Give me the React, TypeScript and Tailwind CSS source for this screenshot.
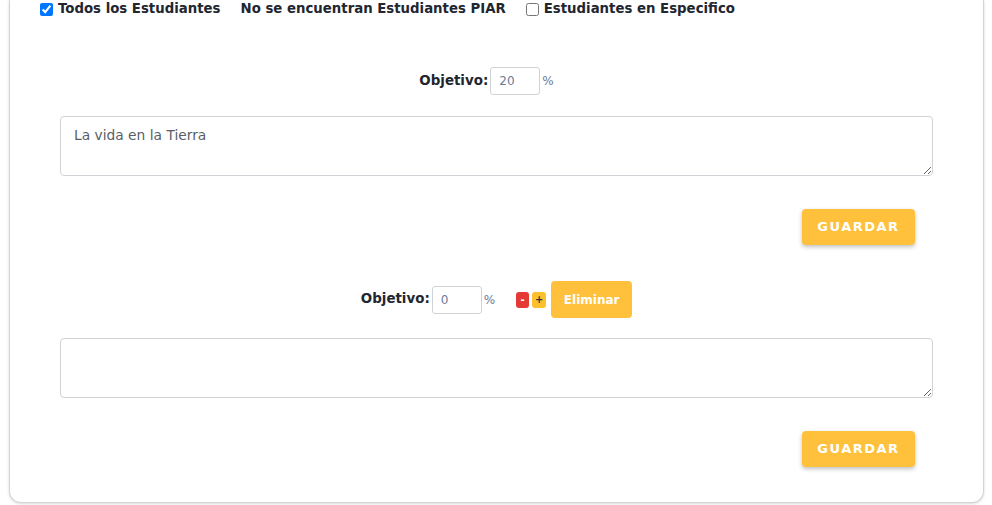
import { useState } from "react";

const font = { fontFamily: '"DejaVu Sans", "Noto Sans", sans-serif' };

function ObjetivoBlock({
  value,
  text,
  extra,
}: {
  value: string;
  text: string;
  extra?: boolean;
}) {
  const [pct, setPct] = useState(value);
  const [desc, setDesc] = useState(text);

  return (
    <div>
      <div className={`flex items-center justify-center ${extra ? "h-[37px]" : "h-[28px]"}`}>
        <span className="text-[13.4px] font-bold text-[#222630]">Objetivo:</span>
        <input
          value={pct}
          onChange={(e) => setPct(e.target.value)}
          className="ml-[2px] h-[28px] w-[50px] rounded-[3px] border border-[#cfd3d8] bg-white px-[8px] text-[12px] text-[#6b7a99] outline-none"
        />
        <span className="ml-[2px] text-[12px] text-[#6b7a99]">%</span>
        {extra ? (
          <div className="ml-[21px] flex items-center">
            <button className="flex h-[16px] w-[13px] items-center justify-center rounded-[3px] bg-[#e53935] text-[10px] font-bold leading-none text-white">
              -
            </button>
            <button className="ml-[3px] flex h-[16px] w-[14px] items-center justify-center rounded-[3px] bg-[#fbc02d] text-[10px] font-bold leading-none text-[#333]">
              +
            </button>
            <button className="ml-[5px] h-[37px] w-[81px] rounded-[4px] bg-[#ffc13b] text-[12px] font-bold text-white">
              Eliminar
            </button>
          </div>
        ) : (
          <span className="w-[20px]" />
        )}
      </div>
      <textarea
        value={desc}
        onChange={(e) => setDesc(e.target.value)}
        className={`mx-[50px] block h-[60px] w-[873px] rounded-[4px] border border-[#cfd3d8] px-[13px] py-[8px] text-[13.8px] text-[#5a5d66] outline-none ${extra ? "mt-[20px]" : "mt-[21px]"}`}
      />
      <div className="mt-[33px] flex justify-end pr-[68px]">
        <button className="h-[36px] w-[113px] rounded-[4px] bg-[#ffc13b] text-[13px] font-bold tracking-[1.5px] text-white shadow-[0_2px_4px_rgba(0,0,0,0.25)]">
          GUARDAR
        </button>
      </div>
    </div>
  );
}

export default function App() {
  return (
    <div className="h-[505px] w-[992px] bg-white" style={font}>
      <div className="ml-[9px] w-[975px] rounded-b-[12px] border border-t-0 border-[#d4d4d4] bg-white pb-[35px] shadow-[0_1px_3px_rgba(0,0,0,0.15)]">
        <div className="flex h-[18px] items-center pl-[30px] text-[13.3px] font-bold text-[#222630]">
          <label className="flex items-center">
            <input type="checkbox" defaultChecked className="m-0 h-[13px] w-[13px]" />
            <span className="ml-[5px]">Todos los Estudiantes</span>
          </label>
          <span className="ml-[20px]">No se encuentran Estudiantes PIAR</span>
          <label className="ml-[20px] flex items-center">
            <input type="checkbox" className="m-0 h-[13px] w-[13px]" />
            <span className="ml-[5px]">Estudiantes en Especifico</span>
          </label>
        </div>
        <div className="mt-[49px]">
          <ObjetivoBlock value="20" text="La vida en la Tierra" />
        </div>
        <div className="mt-[36px]">
          <ObjetivoBlock value="0" text="" extra />
        </div>
      </div>
    </div>
  );
}
